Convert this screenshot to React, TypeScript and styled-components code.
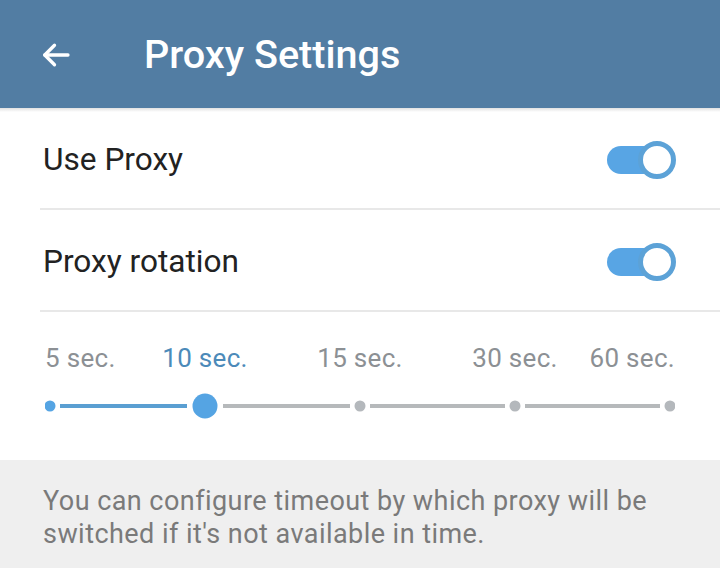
import React from "react";
import styled, { createGlobalStyle } from "styled-components";

const Global = createGlobalStyle`
  html, body { margin: 0; padding: 0; background: #ffffff; }
  body { font-family: Roboto, "Noto Sans", Arial, sans-serif; -webkit-font-smoothing: antialiased; }
  * { box-sizing: border-box; }
`;

const Page = styled.div`
  width: 720px;
  height: 568px;
  overflow: hidden;
  display: flex;
  flex-direction: column;
  background: #ffffff;
`;

const Header = styled.header`
  position: relative;
  height: 108px;
  flex: 0 0 108px;
  background: #527da3;
  display: flex;
  align-items: center;
  padding-left: 36px;
  gap: 68px;
  z-index: 1;
  &::after {
    content: "";
    position: absolute;
    left: 0;
    right: 0;
    top: 108px;
    height: 4px;
    background: linear-gradient(rgba(0,0,0,0.12), rgba(0,0,0,0));
  }
`;

const BackButton = styled.div`
  width: 40px;
  height: 40px;
  display: flex;
  align-items: center;
  justify-content: center;
  margin-top: 2px;
`;

const Title = styled.h1`
  margin: 0;
  color: #ffffff;
  font-size: 39.6px;
  font-weight: 500;
  letter-spacing: 0;
  margin-top: 1px;
`;

const Row = styled.div`
  height: 100px;
  display: flex;
  align-items: center;
  justify-content: space-between;
  padding: 3px 44px 0 43px;
`;

const RowLabel = styled.span`
  font-size: 31.6px;
  color: #222222;
  font-weight: 400;
`;

const Divider = styled.div`
  height: 2px;
  margin-left: 40px;
  background: #e8e8e8;
`;

const ToggleWrap = styled.div`
  position: relative;
  width: 69px;
  height: 38px;
  display: flex;
  align-items: center;
`;

const ToggleTrack = styled.div`
  width: 50px;
  height: 28px;
  border-radius: 14px;
  background: #58a5e4;
`;

const ToggleThumb = styled.div`
  position: absolute;
  right: 0;
  top: 0;
  width: 38px;
  height: 38px;
  border-radius: 50%;
  background: #ffffff;
  border: 5px solid #5ca2d7;
`;

const SliderSection = styled.div`
  height: 148px;
  padding: 29px 45px 0 45px;
  display: flex;
  flex-direction: column;
`;

const Labels = styled.div`
  display: grid;
  grid-template-columns: 82.5px 155px 155px 155px 82.5px;
  height: 34px;
  align-items: center;
`;

const Tick = styled.span<{ $active?: boolean; $align: "start" | "center" | "end" }>`
  justify-self: ${(p) => p.$align};
  font-size: 26px;
  letter-spacing: 0.3px;
  color: ${(p) => (p.$active ? "#4c8ab9" : "#8c9094")};
  white-space: nowrap;
`;

const Track = styled.svg`
  display: block;
  margin-top: 16px;
`;

const Footer = styled.div`
  flex: 1;
  background: #efefef;
  padding: 25px 43px 0 43px;
  font-size: 27px;
  line-height: 33px;
  color: #7a7a7a;
  letter-spacing: 0.45px;
`;

const Toggle = () => (
  <ToggleWrap>
    <ToggleTrack />
    <ToggleThumb />
  </ToggleWrap>
);

const ticks = ["5 sec.", "10 sec.", "15 sec.", "30 sec.", "60 sec."];
const selected = 1;

const SliderTrack = () => {
  const xs = [5, 160, 315, 470, 625];
  const y = 15;
  const segs: React.ReactNode[] = [];
  for (let i = 0; i < xs.length - 1; i++) {
    const r1 = i === selected ? 13 : 5;
    const r2 = i + 1 === selected ? 13 : 5;
    const active = i < selected;
    segs.push(
      <line
        key={"s" + i}
        x1={xs[i] + r1 + 5}
        x2={xs[i + 1] - r2 - 5}
        y1={y}
        y2={y}
        stroke={active ? "#5a9fd2" : "#b6b9bb"}
        strokeWidth={4}
      />
    );
  }
  return (
    <Track width={630} height={30} viewBox="0 0 630 30">
      {segs}
      {xs.map((x, i) => (
        <circle
          key={"d" + i}
          cx={x}
          cy={y}
          r={i === selected ? 12.5 : 5.5}
          fill={i <= selected ? "#55a4e3" : "#b4b8bc"}
        />
      ))}
    </Track>
  );
};

export default function App() {
  return (
    <Page>
      <Global />
      <Header>
        <BackButton>
          <svg width="36" height="36" viewBox="0 0 24 24" fill="none" stroke="#ffffff" strokeWidth="2.2" strokeLinecap="round" strokeLinejoin="round">
            <path d="M20 12H4.5" />
            <path d="M11 5.5L4.5 12L11 18.5" />
          </svg>
        </BackButton>
        <Title>Proxy Settings</Title>
      </Header>
      <Row>
        <RowLabel>Use Proxy</RowLabel>
        <Toggle />
      </Row>
      <Divider />
      <Row>
        <RowLabel>Proxy rotation</RowLabel>
        <Toggle />
      </Row>
      <Divider />
      <SliderSection>
        <Labels>
          {ticks.map((t, i) => (
            <Tick
              key={t}
              $active={i === selected}
              $align={i === 0 ? "start" : i === ticks.length - 1 ? "end" : "center"}
            >
              {t}
            </Tick>
          ))}
        </Labels>
        <SliderTrack />
      </SliderSection>
      <Footer>
        You can configure timeout by which proxy will be switched if it's not available in time.
      </Footer>
    </Page>
  );
}
